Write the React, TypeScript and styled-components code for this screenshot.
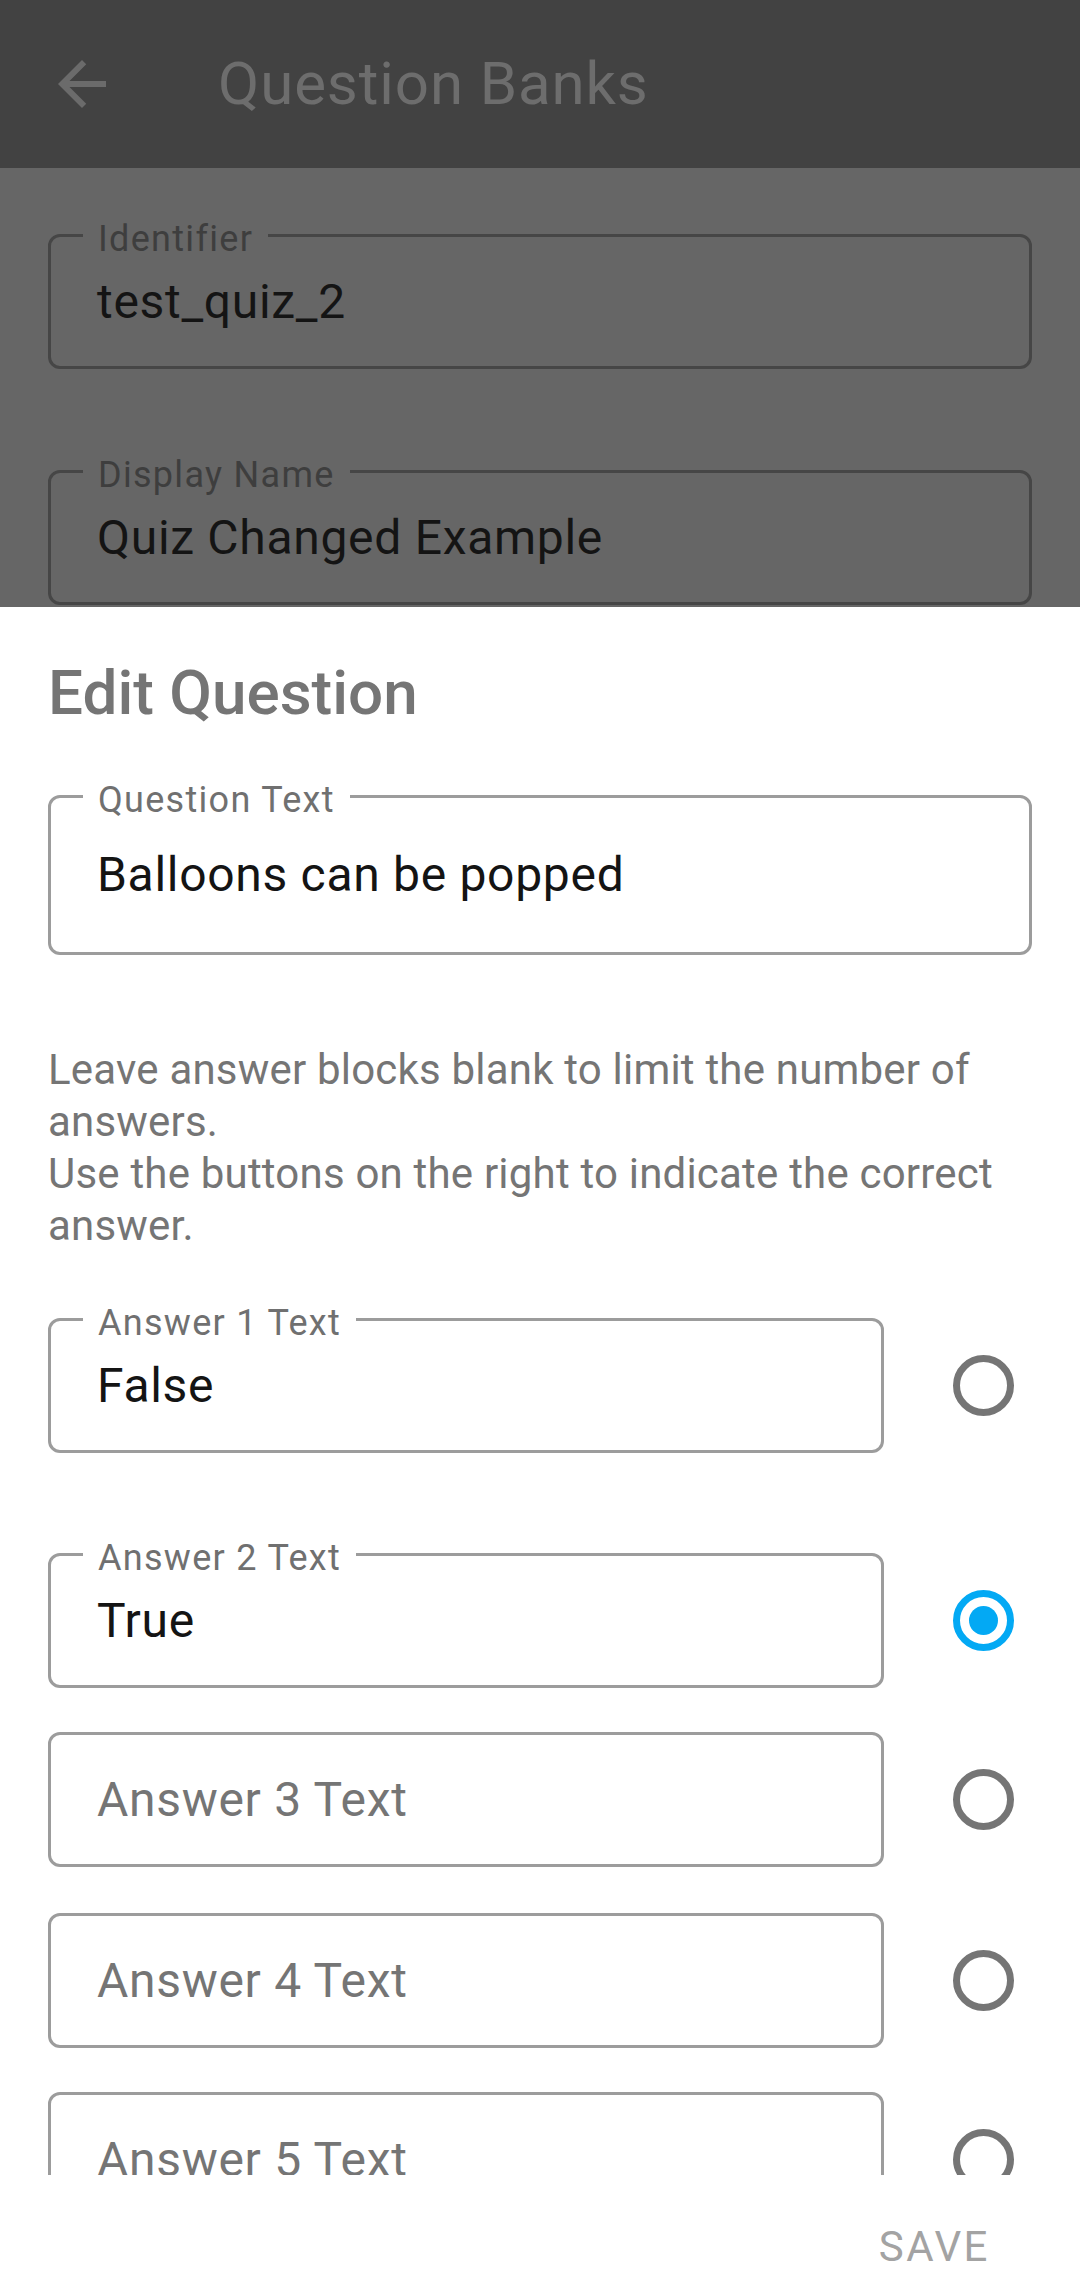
import React from "react";
import styled, { createGlobalStyle } from "styled-components";

const FONT = `"Roboto", "Liberation Sans", sans-serif`;

const Global = createGlobalStyle`
  html, body { margin: 0; padding: 0; }
  body {
    width: 1080px;
    height: 2275px;
    overflow: hidden;
    font-family: ${FONT};
    background: #666666;
  }
  #root { width: 1080px; height: 2275px; }
`;

const Screen = styled.div`
  width: 1080px;
  height: 2275px;
  display: flex;
  flex-direction: column;
  background: #666666;
  overflow: hidden;
`;

const AppBar = styled.header`
  flex: none;
  height: 168px;
  box-sizing: border-box;
  background: #424242;
  display: flex;
  align-items: center;
  padding-left: 46px;
`;

const BackButton = styled.div`
  width: 72px;
  height: 72px;
  margin-right: 100px;
  display: flex;
  align-items: center;
  justify-content: center;
  color: #6b6b6b;
`;

const Title = styled.h1`
  margin: 0;
  font-size: 60px;
  font-weight: 400;
  letter-spacing: 0.9px;
  color: #6d6d6d;
  line-height: 72px;
`;

const Backdrop = styled.div`
  flex: none;
  height: 439px;
  box-sizing: border-box;
  overflow: hidden;
  padding: 0 48px;
  display: flex;
  flex-direction: column;
  & > * { flex-shrink: 0; }
`;

const Sheet = styled.section`
  flex: 1;
  min-height: 0;
  background: #ffffff;
  display: flex;
  flex-direction: column;
`;

const ScrollArea = styled.div`
  flex: 1;
  min-height: 0;
  overflow: hidden;
  padding: 50px 48px 0;
  display: flex;
  flex-direction: column;
  & > * { flex-shrink: 0; }
`;

const SheetTitle = styled.h2`
  margin: 0;
  font-size: 62px;
  line-height: 72px;
  font-weight: 500;
  color: #757575;
`;

const FieldBox = styled.div<{ $dim?: boolean; $tall?: boolean; $mt?: number; $grow?: boolean }>`
  position: relative;
  flex: ${(p) => (p.$grow ? "1 1 auto" : "none")};
  box-sizing: border-box;
  height: ${(p) => (p.$tall ? 160 : 135)}px;
  margin-top: ${(p) => p.$mt ?? 0}px;
  border: 3px solid ${(p) => (p.$dim ? "#464646" : "#9c9c9c")};
  border-radius: 12px;
  display: flex;
  align-items: center;
  padding: 0 46px;
`;

const FloatLabel = styled.span<{ $dim?: boolean }>`
  position: absolute;
  top: -16px;
  left: 32px;
  padding: 0 15px;
  background: ${(p) => (p.$dim ? "#666666" : "#ffffff")};
  font-size: 36px;
  line-height: 36px;
  letter-spacing: 1.3px;
  color: ${(p) => (p.$dim ? "#3e3e3e" : "#707070")};
  white-space: nowrap;
`;

const Value = styled.span<{ $placeholder?: boolean }>`
  font-size: 48px;
  line-height: 56px;
  letter-spacing: 0.7px;
  color: ${(p) => (p.$placeholder ? "#757575" : "#141414")};
  white-space: nowrap;
`;

const Helper = styled.p`
  margin: 89px 0 0;
  font-size: 42px;
  line-height: 52px;
  letter-spacing: 0.2px;
  color: #757575;
`;

const HelperLine = styled.span`
  display: block;
  white-space: nowrap;
`;

const AnswerRow = styled.div<{ $mt: number }>`
  display: flex;
  align-items: center;
  gap: 69px;
  margin: ${(p) => p.$mt}px 18px 0 0;
  flex: none;
`;

const Radio = styled.span<{ $checked?: boolean }>`
  flex: none;
  width: 61px;
  height: 61px;
  box-sizing: border-box;
  border-radius: 50%;
  border: 7px solid ${(p) => (p.$checked ? "#03a9f4" : "#757575")};
  display: flex;
  align-items: center;
  justify-content: center;
  &::after {
    content: "";
    display: ${(p) => (p.$checked ? "block" : "none")};
    width: 29px;
    height: 29px;
    border-radius: 50%;
    background: #03a9f4;
  }
`;

const Footer = styled.footer`
  flex: none;
  height: 100px;
  box-sizing: border-box;
  display: flex;
  justify-content: flex-end;
  align-items: flex-start;
  padding: 51px 90px 0 0;
`;

const SaveButton = styled.span`
  font-size: 42px;
  line-height: 42px;
  font-weight: 400;
  letter-spacing: 2.5px;
  color: #a3a3a3;
`;

type FieldProps = {
  label?: string;
  value?: string;
  placeholder?: string;
  dim?: boolean;
  tall?: boolean;
  grow?: boolean;
  mt?: number;
};

const Field = ({ label, value, placeholder, dim, tall, grow, mt }: FieldProps) => (
  <FieldBox $dim={dim} $tall={tall} $grow={grow} $mt={mt}>
    {label && <FloatLabel $dim={dim}>{label}</FloatLabel>}
    {value ? <Value>{value}</Value> : <Value $placeholder>{placeholder}</Value>}
  </FieldBox>
);

const answers = [
  { mt: 66, label: "Answer 1 Text", value: "False", checked: false },
  { mt: 100, label: "Answer 2 Text", value: "True", checked: true },
  { mt: 44, placeholder: "Answer 3 Text", checked: false },
  { mt: 46, placeholder: "Answer 4 Text", checked: false },
  { mt: 44, placeholder: "Answer 5 Text", checked: false },
];

export default function App() {
  return (
    <>
      <Global />
      <Screen>
        <AppBar>
          <BackButton>
            <svg width="72" height="72" viewBox="0 0 24 24" fill="currentColor">
              <path d="M20 11H7.83l5.59-5.59L12 4l-8 8 8 8 1.41-1.41L7.83 13H20v-2z" />
            </svg>
          </BackButton>
          <Title>Question Banks</Title>
        </AppBar>
        <Backdrop>
          <Field dim mt={66} label="Identifier" value="test_quiz_2" />
          <Field dim mt={101} label="Display Name" value="Quiz Changed Example" />
        </Backdrop>
        <Sheet>
          <ScrollArea>
            <SheetTitle>Edit Question</SheetTitle>
            <Field tall mt={66} label="Question Text" value="Balloons can be popped" />
            <Helper>
              <HelperLine>Leave answer blocks blank to limit the number of</HelperLine>
              <HelperLine>answers.</HelperLine>
              <HelperLine>Use the buttons on the right to indicate the correct</HelperLine>
              <HelperLine>answer.</HelperLine>
            </Helper>
            {answers.map((a, i) => (
              <AnswerRow key={i} $mt={a.mt}>
                <Field grow label={a.label} value={a.value} placeholder={a.placeholder} />
                <Radio $checked={a.checked} />
              </AnswerRow>
            ))}
          </ScrollArea>
          <Footer>
            <SaveButton>SAVE</SaveButton>
          </Footer>
        </Sheet>
      </Screen>
    </>
  );
}
